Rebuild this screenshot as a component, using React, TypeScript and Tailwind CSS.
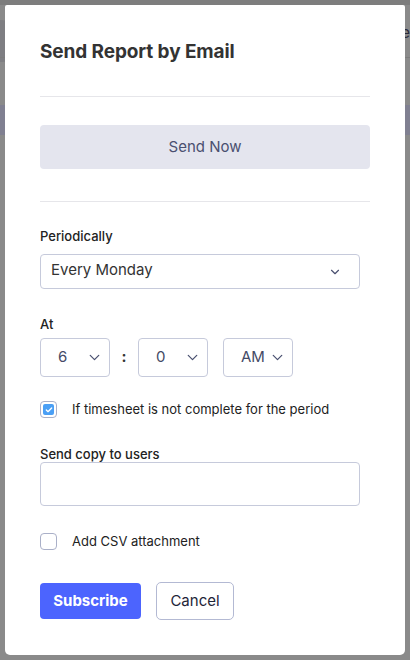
import { ChevronDown, Check } from "lucide-react"

function TimeSelect({ value, pl = "pl-[17px]" }: { value: string; pl?: string }) {
  return (
    <div className={`w-[70px] h-[39px] flex items-center justify-between ${pl} pr-[6px] border border-[#c6cadb] rounded-[4px] text-[15px] text-[#444a66]`}>
      <span>{value}</span>
      <ChevronDown className="h-[17px] w-[17px] text-[#4a5070]" strokeWidth={1.75} />
    </div>
  )
}

export default function App() {
  return (
    <div
      className="relative h-[660px] w-[410px] overflow-hidden bg-[#8a8a8a] text-[#222]"
      style={{ fontFamily: "Inter, 'Noto Sans', sans-serif" }}
    >
      {/* page behind the overlay */}
      <div className="absolute inset-x-0 top-0 h-[5px] bg-[#7d7d7d]" />
      <div className="absolute left-[-20px] top-[20px] h-[42px] w-[42px] rounded-full bg-[#7e7e82]" />
      <div className="absolute inset-x-0 top-[57px] h-px bg-[#7c7c7c]" />
      <div className="absolute inset-x-0 top-[105px] h-[30px] bg-[#808091]" />
      <div className="absolute right-0 top-[22px] text-[15px] text-[#2a2a3a]">ce</div>

      {/* modal */}
      <div className="absolute left-[5px] top-[5px] w-[400px] h-[650px] bg-white rounded-b-[5px] rounded-t-[2px] px-[35px] flex flex-col">
        <h2 className="mt-[35px] text-[19px] font-bold text-[#333] leading-[24px] tracking-[-0.1px]">
          Send Report by Email
        </h2>
        <div className="mt-[32px] h-px bg-[#e6e6ea] w-[330px]" />

        <button className="mt-[28px] w-[330px] h-[44px] rounded-[4px] bg-[#e4e5ee] text-[15px] text-[#4a5070]">
          Send Now
        </button>
        <div className="mt-[32px] h-px bg-[#e6e6ea] w-[330px]" />

        <label className="mt-[26px] text-[13px] leading-[16px] font-medium text-[#222]">Periodically</label>
        <div className="mt-[10px] w-[320px] h-[35px] flex items-center justify-between pl-[10px] pr-[17px] border border-[#c6cadb] rounded-[4px] text-[15px] text-[#333]">
          <span className="-mt-[2px]">Every Monday</span>
          <ChevronDown className="h-[14px] w-[14px] text-[#4a5070]" strokeWidth={2} />
        </div>

        <label className="mt-[27px] text-[13px] leading-[16px] font-medium text-[#222]">At</label>
        <div className="mt-[6px] flex items-center">
          <TimeSelect value="6" />
          <span className="w-[28px] text-center text-[15px] font-bold text-[#333]">:</span>
          <TimeSelect value="0" />
          <div className="w-[15px]" />
          <TimeSelect value="AM" pl="pl-[17px]" />
        </div>

        <div className="mt-[23px] flex items-center">
          <div className="h-[17px] w-[17px] rounded-[4px] border border-[#aab0c8] flex items-center justify-center">
            <div className="h-[11px] w-[11px] rounded-[2px] bg-[#4a9ff5] flex items-center justify-center">
              <Check className="h-[8px] w-[8px] text-white" strokeWidth={4} />
            </div>
          </div>
          <span className="ml-[15px] text-[13px] text-[#222]">If timesheet is not complete for the period</span>
        </div>

        <label className="mt-[26px] text-[13px] leading-[16px] font-medium text-[#222]">Send copy to users</label>
        <div className="mt-0 w-[320px] h-[44px] border border-[#c6cadb] rounded-[4px]" />

        <div className="mt-[26px] flex items-center">
          <div className="h-[17px] w-[17px] rounded-[4px] border border-[#aab0c8]" />
          <span className="ml-[15px] text-[13px] text-[#222]">Add CSV attachment</span>
        </div>

        <div className="mt-[31px] flex items-center gap-[15px]">
          <button className="w-[101px] h-[36px] rounded-[4px] bg-[#4c64fe] text-white text-[15px] font-bold">
            Subscribe
          </button>
          <button className="w-[78px] h-[38px] rounded-[5px] border border-[#b3b9d3] text-[15px] text-[#1e2538]">
            Cancel
          </button>
        </div>
      </div>
    </div>
  )
}
